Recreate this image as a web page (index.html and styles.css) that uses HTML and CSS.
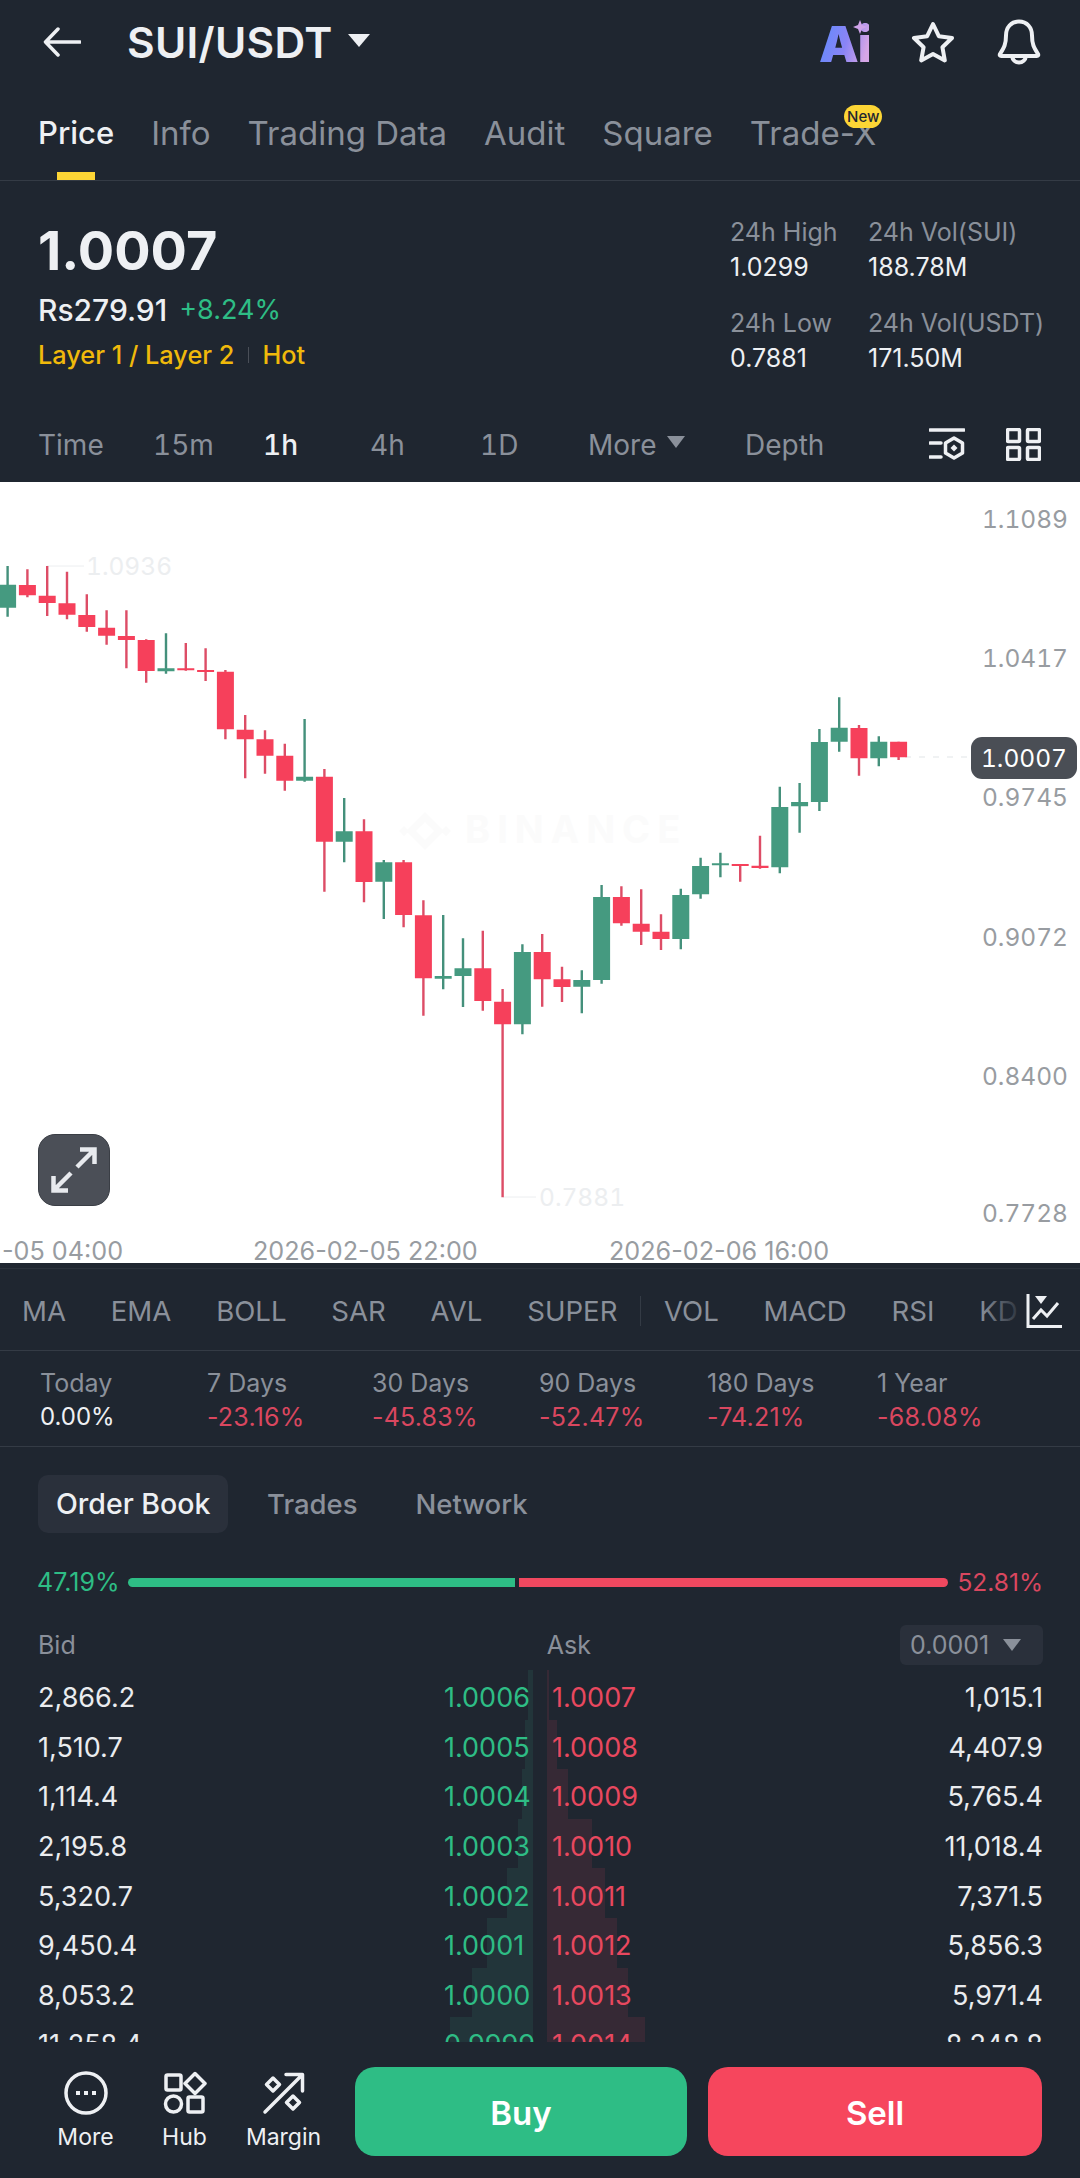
FILE: index.html
```html
<!DOCTYPE html>
<html lang="en">
<head>
<meta charset="utf-8">
<title>SUI/USDT</title>
<link rel="stylesheet" href="styles.css">
</head>
<body>
<main class="page">
  <header class="top-bar">
    <svg class="back" width="38" height="30" viewBox="0 0 38 30"><path d="M37 15H3M15 2 2.500 15 15 28"/></svg>
    <h1 class="pair">SUI/USDT</h1>
    <span class="caret caret-title"></span>
    <div class="top-icons">
      <svg class="ai" width="50" height="44" viewBox="0 0 50 44">
        <defs><linearGradient id="aig" x1="0" y1="0" x2="1" y2="0.300"><stop offset="0" stop-color="#5a8cfc"/><stop offset="0.600" stop-color="#8a84f6"/><stop offset="1" stop-color="#d6a6e6"/></linearGradient></defs>
        <text class="ai-text" x="0" y="42" fill="url(#aig)">Ai</text>
        <path class="ai-spark" d="M41 0l2 5 5 2-5 2-2 5-2-5-5-2 5-2z"/>
      </svg>
      <svg class="line-icon" width="46" height="42" viewBox="0 0 46 42"><path d="M23 3l5.800 12.200 13.200 1.800-9.600 9.200 2.400 13.200L23 33l-11.800 6.400 2.400-13.200L4 17l13.200-1.800z"/></svg>
      <svg class="line-icon" width="44" height="46" viewBox="0 0 44 46"><path d="M22 2.500c-8 0-13 6-13 14 0 9-2 12-6 18.500-.6 1.200 0 2 1.200 2h35.600c1.200 0 1.800-.8 1.200-2-4-6.500-6-9.500-6-18.500 0-8-5-14-13-14zM15 37c.5 4 3.500 6.500 7 6.500s6.500-2.500 7-6.500"/></svg>
    </div>
  </header>

  <nav class="tabs">
    <a class="tab tab-active">Price</a>
    <a class="tab">Info</a>
    <a class="tab">Trading Data</a>
    <a class="tab">Audit</a>
    <a class="tab">Square</a>
    <a class="tab tab-badged">Trade-X<span class="badge">New</span></a>
  </nav>

  <section class="ticker">
    <div class="ticker-main">
      <div class="last-price">1.0007</div>
      <div class="fiat-line"><span class="fiat">Rs279.91</span><span class="change">+8.24%</span></div>
      <div class="tags"><span>Layer 1 / Layer 2</span><i class="tag-sep"></i><span>Hot</span></div>
    </div>
    <dl class="ticker-stats">
      <div class="stat"><dt>24h High</dt><dd>1.0299</dd></div>
      <div class="stat"><dt>24h Vol(SUI)</dt><dd>188.78M</dd></div>
      <div class="stat"><dt>24h Low</dt><dd>0.7881</dd></div>
      <div class="stat"><dt>24h Vol(USDT)</dt><dd>171.50M</dd></div>
    </dl>
  </section>

  <section class="timeframes">
    <span class="tf">Time</span>
    <span class="tf">15m</span>
    <span class="tf tf-active">1h</span>
    <span class="tf">4h</span>
    <span class="tf">1D</span>
    <span class="tf tf-more">More<span class="caret caret-grey"></span></span>
    <span class="tf">Depth</span>
    <span class="tf-icons">
      <svg class="line-icon thin" width="36" height="34" viewBox="0 0 36 34"><path d="M1 2h34M1 15h11M1 29h11"/><path d="M25 10l8.500 5v10L25 30l-8.500-5V15z"/><path class="solid" d="M25 16.500l3.500 3.500-3.500 3.500-3.500-3.500z"/></svg>
      <svg class="line-icon thin" width="35" height="33" viewBox="0 0 35 33"><rect x="1.500" y="1.500" width="12" height="12" rx="1"/><rect x="21.500" y="1.500" width="12" height="12" rx="1"/><rect x="1.500" y="19.500" width="12" height="12" rx="1"/><rect x="21.500" y="19.500" width="12" height="12" rx="1"/></svg>
    </span>
  </section>

  <section class="chart">
    <svg class="chart-svg" width="1080" height="781" viewBox="0 482 1080 781">
      <g class="watermark">
        <path d="M425 812l14 14-5 5-9-9-9 9-5-5zM404 826l5 5-5 5-5-5zM446 826l5 5-5 5-5-5zM425 840l14-14 5 5-19 19-19-19 5-5z"/>
        <text x="465" y="843">BINANCE</text>
      </g>
      <path class="marker-line" d="M47 566H84M503 1197H536"/>
      <text class="marker" x="86" y="575">1.0936</text>
      <text class="marker" x="539" y="1206">0.7881</text>
      <path class="last-line" d="M905 757H970"/>
      <path class="wick up" d="M7.600 566V616.700M166 633.300V673.700M304.600 719V781.700M344.200 798V862.300M383.800 860V919M443.200 915V989.300M463 938.300V1007M522.400 944.300V1034.300M581.800 970.300V1013.300M601.600 885V983.700M680.800 888.700V949.300M700.600 857.700V898.700M720.400 852.700V877.300M779.800 786.700V873.300M799.600 783V832.700M819.400 729V811M839.200 697.300V751.700M878.800 736.300V766.300"/>
      <path class="body up" d="M7.600 584.700V607.700M166 668.300V671.300M304.600 776.700V780.700M344.200 831.300V841.700M383.800 862.300V881.700M443.200 976V978.700M463 968.300V976M522.400 952V1024.300M581.800 980V986.700M601.600 897V980M680.800 895V939M700.600 866V894.300M720.400 863.300V865.300M779.800 807V867.300M799.600 802V806.300M819.400 742V802M839.200 727.700V741.700M878.800 741.700V758.300"/>
      <path class="wick down" d="M27.400 569.300V597.300M47.200 566V616M67 571.700V619.300M86.800 594.300V631.700M106.600 610.300V644.700M126.400 610.300V668.300M146.200 639.300V682.700M185.800 643V670.700M205.600 648.300V681M225.400 670V739.300M245.200 715V778.300M265 730.300V773.700M284.800 743.700V790.700M324.400 769V891.700M364 819.300V902.300M403.600 860V927.300M423.400 900.300V1015.700M482.800 930.700V1010.700M502.600 989V1197.300M542.200 934V1006.700M562 966.700V1002M621.400 886.300V925.700M641.200 889.300V945M661 914.300V950M740.200 864V881.700M760 835.700V868.700M859 725V775.700M898.600 741.700V760"/>
      <path class="body down" d="M27.400 585V595.300M47.200 595.700V603M67 603.300V614.700M86.800 615V627M106.600 627.700V635.700M126.400 636V640M146.200 640V671M185.800 668.300V670.300M205.600 670V672M225.400 671.700V729.300M245.200 729.700V739.300M265 739.300V755.700M284.800 755.700V780.700M324.400 776.700V841.700M364 831.300V882M403.600 862.300V915M423.400 915.300V978.300M482.800 968.300V1001M502.600 1001.700V1024.300M542.200 952V979.300M562 979.300V987M621.400 897V923.300M641.200 923.700V931.700M661 931.700V939M740.200 864V866M760 865.700V868M859 728V758.300M898.600 741.700V757.300"/>
      <g class="axis-y">
        <text x="1068" y="528">1.1089</text>
        <text x="1068" y="667">1.0417</text>
        <text x="1068" y="806">0.9745</text>
        <text x="1068" y="946">0.9072</text>
        <text x="1068" y="1085">0.8400</text>
        <text x="1068" y="1222">0.7728</text>
      </g>
      <g class="axis-x">
        <text x="2" y="1260">-05 04:00</text>
        <text x="253" y="1260">2026-02-05 22:00</text>
        <text x="609" y="1260">2026-02-06 16:00</text>
      </g>
    </svg>
    <div class="price-tag">1.0007</div>
    <button class="expand" type="button" aria-label="Expand">
      <svg width="48" height="48" viewBox="0 0 48 48"><path d="M27 21 44 4M30 3.500h14.500V18M21 27 4 44M18 44.500H3.500V30"/></svg>
    </button>
  </section>

  <section class="indicators">
    <div class="ind-list">
      <span>MA</span><span>EMA</span><span>BOLL</span><span>SAR</span><span>AVL</span><span>SUPER</span><i class="ind-sep"></i><span>VOL</span><span>MACD</span><span>RSI</span><span>KD</span>
    </div>
    <span class="ind-fade"></span>
    <svg class="ind-icon" width="38" height="36" viewBox="0 0 38 36">
      <path class="line-stroke" d="M2 1v32.500h34"/>
      <path class="line-stroke" d="M7 26l8-9 6 6 11-13"/>
      <path class="solid-fill" d="M9 3h12l-6 8z"/>
    </svg>
  </section>

  <section class="periods">
    <div class="period"><span>Today</span><b class="flat">0.00%</b></div>
    <div class="period"><span>7 Days</span><b>-23.16%</b></div>
    <div class="period"><span>30 Days</span><b>-45.83%</b></div>
    <div class="period"><span>90 Days</span><b>-52.47%</b></div>
    <div class="period"><span>180 Days</span><b>-74.21%</b></div>
    <div class="period"><span>1 Year</span><b>-68.08%</b></div>
  </section>

  <nav class="book-tabs">
    <a class="book-tab book-tab-active">Order Book</a>
    <a class="book-tab">Trades</a>
    <a class="book-tab">Network</a>
  </nav>

  <section class="ratio">
    <span class="ratio-bid">47.19%</span>
    <span class="ratio-track"><i class="ratio-green" style="width:47.19%"></i><i class="ratio-red"></i></span>
    <span class="ratio-ask">52.81%</span>
  </section>

  <section class="book-head">
    <span class="head-bid">Bid</span>
    <span class="head-ask">Ask</span>
    <span class="precision">0.0001<span class="caret caret-grey"></span></span>
  </section>

  <section class="book">
    <div class="row"><i class="depth depth-bid" style="width:5px"></i><i class="depth depth-ask" style="width:2px"></i><span class="qty">2,866.2</span><span class="bid">1.0006</span><span class="ask">1.0007</span><span class="qty qty-right">1,015.1</span></div>
    <div class="row"><i class="depth depth-bid" style="width:8px"></i><i class="depth depth-ask" style="width:10px"></i><span class="qty">1,510.7</span><span class="bid">1.0005</span><span class="ask">1.0008</span><span class="qty qty-right">4,407.9</span></div>
    <div class="row"><i class="depth depth-bid" style="width:11px"></i><i class="depth depth-ask" style="width:21px"></i><span class="qty">1,114.4</span><span class="bid">1.0004</span><span class="ask">1.0009</span><span class="qty qty-right">5,765.4</span></div>
    <div class="row"><i class="depth depth-bid" style="width:15px"></i><i class="depth depth-ask" style="width:45px"></i><span class="qty">2,195.8</span><span class="bid">1.0003</span><span class="ask">1.0010</span><span class="qty qty-right">11,018.4</span></div>
    <div class="row"><i class="depth depth-bid" style="width:26px"></i><i class="depth depth-ask" style="width:58px"></i><span class="qty">5,320.7</span><span class="bid">1.0002</span><span class="ask">1.0011</span><span class="qty qty-right">7,371.5</span></div>
    <div class="row"><i class="depth depth-bid" style="width:46px"></i><i class="depth depth-ask" style="width:70px"></i><span class="qty">9,450.4</span><span class="bid">1.0001</span><span class="ask">1.0012</span><span class="qty qty-right">5,856.3</span></div>
    <div class="row"><i class="depth depth-bid" style="width:61px"></i><i class="depth depth-ask" style="width:81px"></i><span class="qty">8,053.2</span><span class="bid">1.0000</span><span class="ask">1.0013</span><span class="qty qty-right">5,971.4</span></div>
    <div class="row"><i class="depth depth-bid" style="width:83px"></i><i class="depth depth-ask" style="width:98px"></i><span class="qty">11,258.4</span><span class="bid">0.9999</span><span class="ask">1.0014</span><span class="qty qty-right">8,248.8</span></div>
  </section>

  <footer class="actions">
    <a class="action">
      <svg class="line-icon thin" width="44" height="44" viewBox="0 0 44 44"><circle cx="22" cy="22" r="20"/><path class="solid" d="M12 20h4v4h-4zM20 20h4v4h-4zM28 20h4v4h-4z"/></svg>
      <span>More</span>
    </a>
    <a class="action">
      <svg class="line-icon thin" width="44" height="44" viewBox="0 0 44 44"><rect x="3" y="4" width="15" height="15" rx="1.500"/><path d="M32 2.500l10 10-10 10-10-10z"/><circle cx="10.500" cy="33" r="8"/><rect x="25" y="26" width="15" height="15" rx="1.500"/></svg>
      <span>Hub</span>
    </a>
    <a class="action">
      <svg class="line-icon thin" width="44" height="44" viewBox="0 0 44 44"><path d="M3 41 40 4M24 3.500h16.500V20"/><path d="M11 7l6.500 6.500-6.500 6.500-6.500-6.500zM31 25l6.500 6.500-6.500 6.500-6.500-6.500z"/></svg>
      <span>Margin</span>
    </a>
    <button class="trade trade-buy" type="button">Buy</button>
    <button class="trade trade-sell" type="button">Sell</button>
  </footer>
</main>
</body>
</html>
```

FILE: styles.css
```css
* { box-sizing: border-box; }
html, body { margin: 0; padding: 0; }
body { background: #1f2630; font-family: Inter, "Noto Sans", sans-serif; color: #eaecef; }
.page { width: 1080px; height: 2178px; overflow: hidden; background: #1f2630; }
h1, dl, dd { margin: 0; }
i { display: block; font-style: normal; }

/* header */
.top-bar { height: 84px; display: flex; align-items: center; padding: 0 39px 0 43px; }
.back { fill: none; stroke: #eef0f3; stroke-width: 3.500; stroke-linecap: round; stroke-linejoin: round; }
.pair { margin-left: 46px; font-size: 42.500px; font-weight: 600; letter-spacing: 0.300px; color: #eef0f3; white-space: nowrap; }
.caret { display: inline-block; width: 0; height: 0; border-style: solid; border-color: currentColor transparent transparent; }
.caret-title { margin-left: 15px; margin-top: -4px; border-width: 13px 11px 0; color: #eef0f3; }
.caret-grey { border-width: 12px 9px 0; color: #8a909a; }
.top-icons { margin-left: auto; display: flex; align-items: center; gap: 41px; }
.ai-text { font-family: Inter, sans-serif; font-size: 50px; font-weight: 900; letter-spacing: -1px; }
.ai-spark { fill: #cfa3ea; }
.line-icon { fill: none; stroke: #eef0f3; stroke-width: 4; stroke-linecap: round; stroke-linejoin: round; }
.line-icon.thin { stroke-width: 3.500; }
.line-icon .solid { fill: #eef0f3; stroke: none; }

/* tabs */
.tabs { height: 97px; display: flex; gap: 37px; padding: 29px 0 0 38px; border-bottom: 1px solid #343b45; }
.tab { position: relative; font-size: 33px; line-height: 40px; height: 40px; color: #8a909a; font-weight: 400; white-space: nowrap; }
.tab-active { color: #eef0f3; font-size: 31px; font-weight: 500; }
.tab-active::after { content: ""; position: absolute; left: 19px; top: 59px; width: 38px; height: 8px; background: #fcd535; }
.badge { position: absolute; right: -6px; top: -8px; width: 38px; height: 23px; border-radius: 12px; background: #fcd535; color: #1f2630; font-size: 15px; line-height: 23px; text-align: center; font-weight: 500; }

/* ticker */
.ticker { height: 220px; display: flex; justify-content: space-between; padding-left: 38px; }
.ticker-main { padding-top: 40px; }
.last-price { font-size: 54px; line-height: 60px; font-weight: 700; color: #eef0f3; }
.fiat-line { margin-top: 11px; display: flex; align-items: center; gap: 12px; font-size: 27px; line-height: 36px; }
.fiat { font-size: 30px; font-weight: 500; color: #eef0f3; }
.change { color: #2ebd85; }
.tags { margin-top: 11px; display: flex; align-items: center; font-size: 25.300px; line-height: 32px; font-weight: 500; color: #f0b90b; }
.tag-sep { width: 1px; height: 16px; margin: 0 13px 0 14px; background: #4a4f58; }
.ticker-stats { width: 350px; display: grid; grid-template-columns: 138px 212px; grid-template-rows: 91px 90px; padding-top: 35px; }
.stat dt { font-size: 25px; line-height: 32px; color: #8a909a; white-space: nowrap; }
.stat dd { margin-top: 3px; font-size: 25px; line-height: 32px; color: #eef0f3; }

/* timeframes */
.timeframes { height: 81px; display: grid; grid-template-columns: 115px 110px 107px 110px 108px 157px 184px 1fr; align-items: center; padding: 6px 0 0 38px; }
.tf { font-size: 28px; line-height: 36px; color: #8a909a; white-space: nowrap; font-variant-numeric: tabular-nums; }
.tf-active { color: #eef0f3; font-weight: 500; }
.tf-more { display: flex; align-items: center; gap: 11px; }
.tf-more .caret { margin-top: -6px; }
.tf-icons { display: flex; align-items: center; gap: 41px; }

/* chart */
.chart { position: relative; height: 781px; background: #fff; }
.chart-svg { display: block; }
.wick { fill: none; stroke-width: 2.400; }
.body { fill: none; stroke-width: 17; }
.wick.up { stroke: #44907b; }
.body.up { stroke: #459a80; }
.wick.down { stroke: #dd4d66; }
.body.down { stroke: #f6405b; }
.axis-y text, .axis-x text { font-size: 25.200px; fill: #989ca1; font-family: Inter, sans-serif; }
.axis-y text { font-size: 24.500px; text-anchor: end; font-variant-numeric: tabular-nums; }
.marker { font-size: 24.500px; fill: #eceef0; font-family: Inter, sans-serif; font-variant-numeric: tabular-nums; }
.marker-line { fill: none; stroke: #eceef0; stroke-width: 1; }
.last-line { fill: none; stroke: #eceef0; stroke-width: 1.500; stroke-dasharray: 6 8; }
.watermark { fill: #fbfbfb; }
.watermark text { font-size: 38px; font-weight: 700; letter-spacing: 7px; font-family: Inter, sans-serif; }
.price-tag { position: absolute; left: 971px; top: 255px; width: 106px; height: 42px; border-radius: 11px; background: #4a4e55; color: #fff; font-size: 24.500px; line-height: 42px; text-align: center; font-variant-numeric: tabular-nums; }
.expand { position: absolute; left: 38px; top: 652px; width: 72px; height: 72px; padding: 0; display: flex; align-items: center; justify-content: center; border: 1px solid #3a3e45; border-radius: 17px; background: #4b4f57; }
.expand svg { fill: none; stroke: #e8eaee; stroke-width: 4.500; }

/* indicators */
.indicators { position: relative; height: 83px; margin-top: 5px; border-top: 1px solid #2b323c; border-bottom: 1px solid #343b45; overflow: hidden; }
.ind-list { display: flex; align-items: center; gap: 44.800px; height: 82px; padding: 1px 0 0 22px; font-size: 27.600px; color: #8a909a; white-space: nowrap; }
.ind-sep { width: 1px; height: 30px; margin: 0 -22px 0 -22px; background: #343b45; }
.ind-fade { position: absolute; right: 0; top: 0; width: 100px; height: 82px; background: linear-gradient(90deg, rgba(31,38,48,0) 0, #1f2630 45%); }
.ind-icon { position: absolute; left: 1026px; top: 24px; fill: none; }
.line-stroke { stroke: #eef0f3; stroke-width: 3; fill: none; }
.solid-fill { fill: #eef0f3; }

/* period returns */
.periods { height: 96px; display: grid; grid-template-columns: 167px 165px 167px 168px 170px 1fr; padding: 15px 0 0 40px; border-bottom: 1px solid #343b45; }
.period span { display: block; font-size: 25px; line-height: 34px; color: #8a909a; white-space: nowrap; }
.period b { display: block; font-weight: 400; font-size: 25px; line-height: 34px; letter-spacing: .200px; color: #d9475f; white-space: nowrap; }
.period b.flat { font-size: 24px; letter-spacing: 0; color: #eef0f3; }

/* order book */
.book-tabs { display: flex; align-items: center; gap: 58px; height: 58px; margin: 28px 0 0 38px; }
.book-tab { font-size: 27.500px; line-height: 36px; color: #8a909a; font-weight: 500; white-space: nowrap; }
.book-tab-active { padding: 11px 18px; width: 190px; height: 58px; border-radius: 10px; background: #2a303b; color: #eef0f3; margin-right: -19px; font-size: 28.500px; }
.ratio { margin-top: 34px; height: 30px; padding: 0 37px; display: flex; align-items: center; gap: 9px; font-size: 25px; }
.ratio-bid { color: #2ebd85; }
.ratio-ask { color: #d9475f; font-size: 24.500px; }
.ratio-track { flex: 1; display: flex; gap: 4px; height: 9px; }
.ratio-green { background: #2ebd85; border-radius: 5px 0 0 5px; }
.ratio-red { flex: 1; background: #f0485f; border-radius: 0 5px 5px 0; }
.book-head { position: relative; margin-top: 28px; height: 40px; padding: 0 37px 0 38px; display: flex; align-items: center; font-size: 25px; color: #8a909a; }
.head-ask { margin-left: 471px; }
.precision { margin-left: auto; width: 143px; height: 40px; padding-left: 10px; display: flex; align-items: center; gap: 14px; border-radius: 6px; background: #2a303b; }
.book { margin-top: 5px; height: 372px; overflow: hidden; }
.row { position: relative; height: 49.600px; padding: 6px 37px 0 38px; display: flex; align-items: center; font-size: 27px; }
.depth { position: absolute; top: 0; bottom: 0; }
.depth-bid { right: 547px; background: #22353a; }
.depth-ask { left: 547px; background: #362935; }
.row span { position: relative; }
.qty { color: #eaecef; }
.row .bid { position: absolute; left: 444px; color: #2ebd85; }
.row .ask { position: absolute; left: 552px; color: #e8485f; }
.qty-right { margin-left: auto; }

/* footer actions */
.actions { height: 136px; padding: 25px 38px 0 36px; display: flex; align-items: flex-start; }
.action { width: 99px; padding-top: 4px; display: flex; flex-direction: column; align-items: center; font-size: 23px; line-height: 30px; color: #eef0f3; }
.action svg { display: block; margin-bottom: 7px; }
.action span { white-space: nowrap; }
.trade { height: 89px; border: 0; border-radius: 20px; color: #fff; font-family: Inter, sans-serif; font-size: 33px; font-weight: 600; padding: 2px 0 0; }
.trade-buy { width: 332px; margin-left: 22px; background: #2ebd85; }
.trade-sell { width: 334px; margin-left: 21px; background: #f6465d; }
```
